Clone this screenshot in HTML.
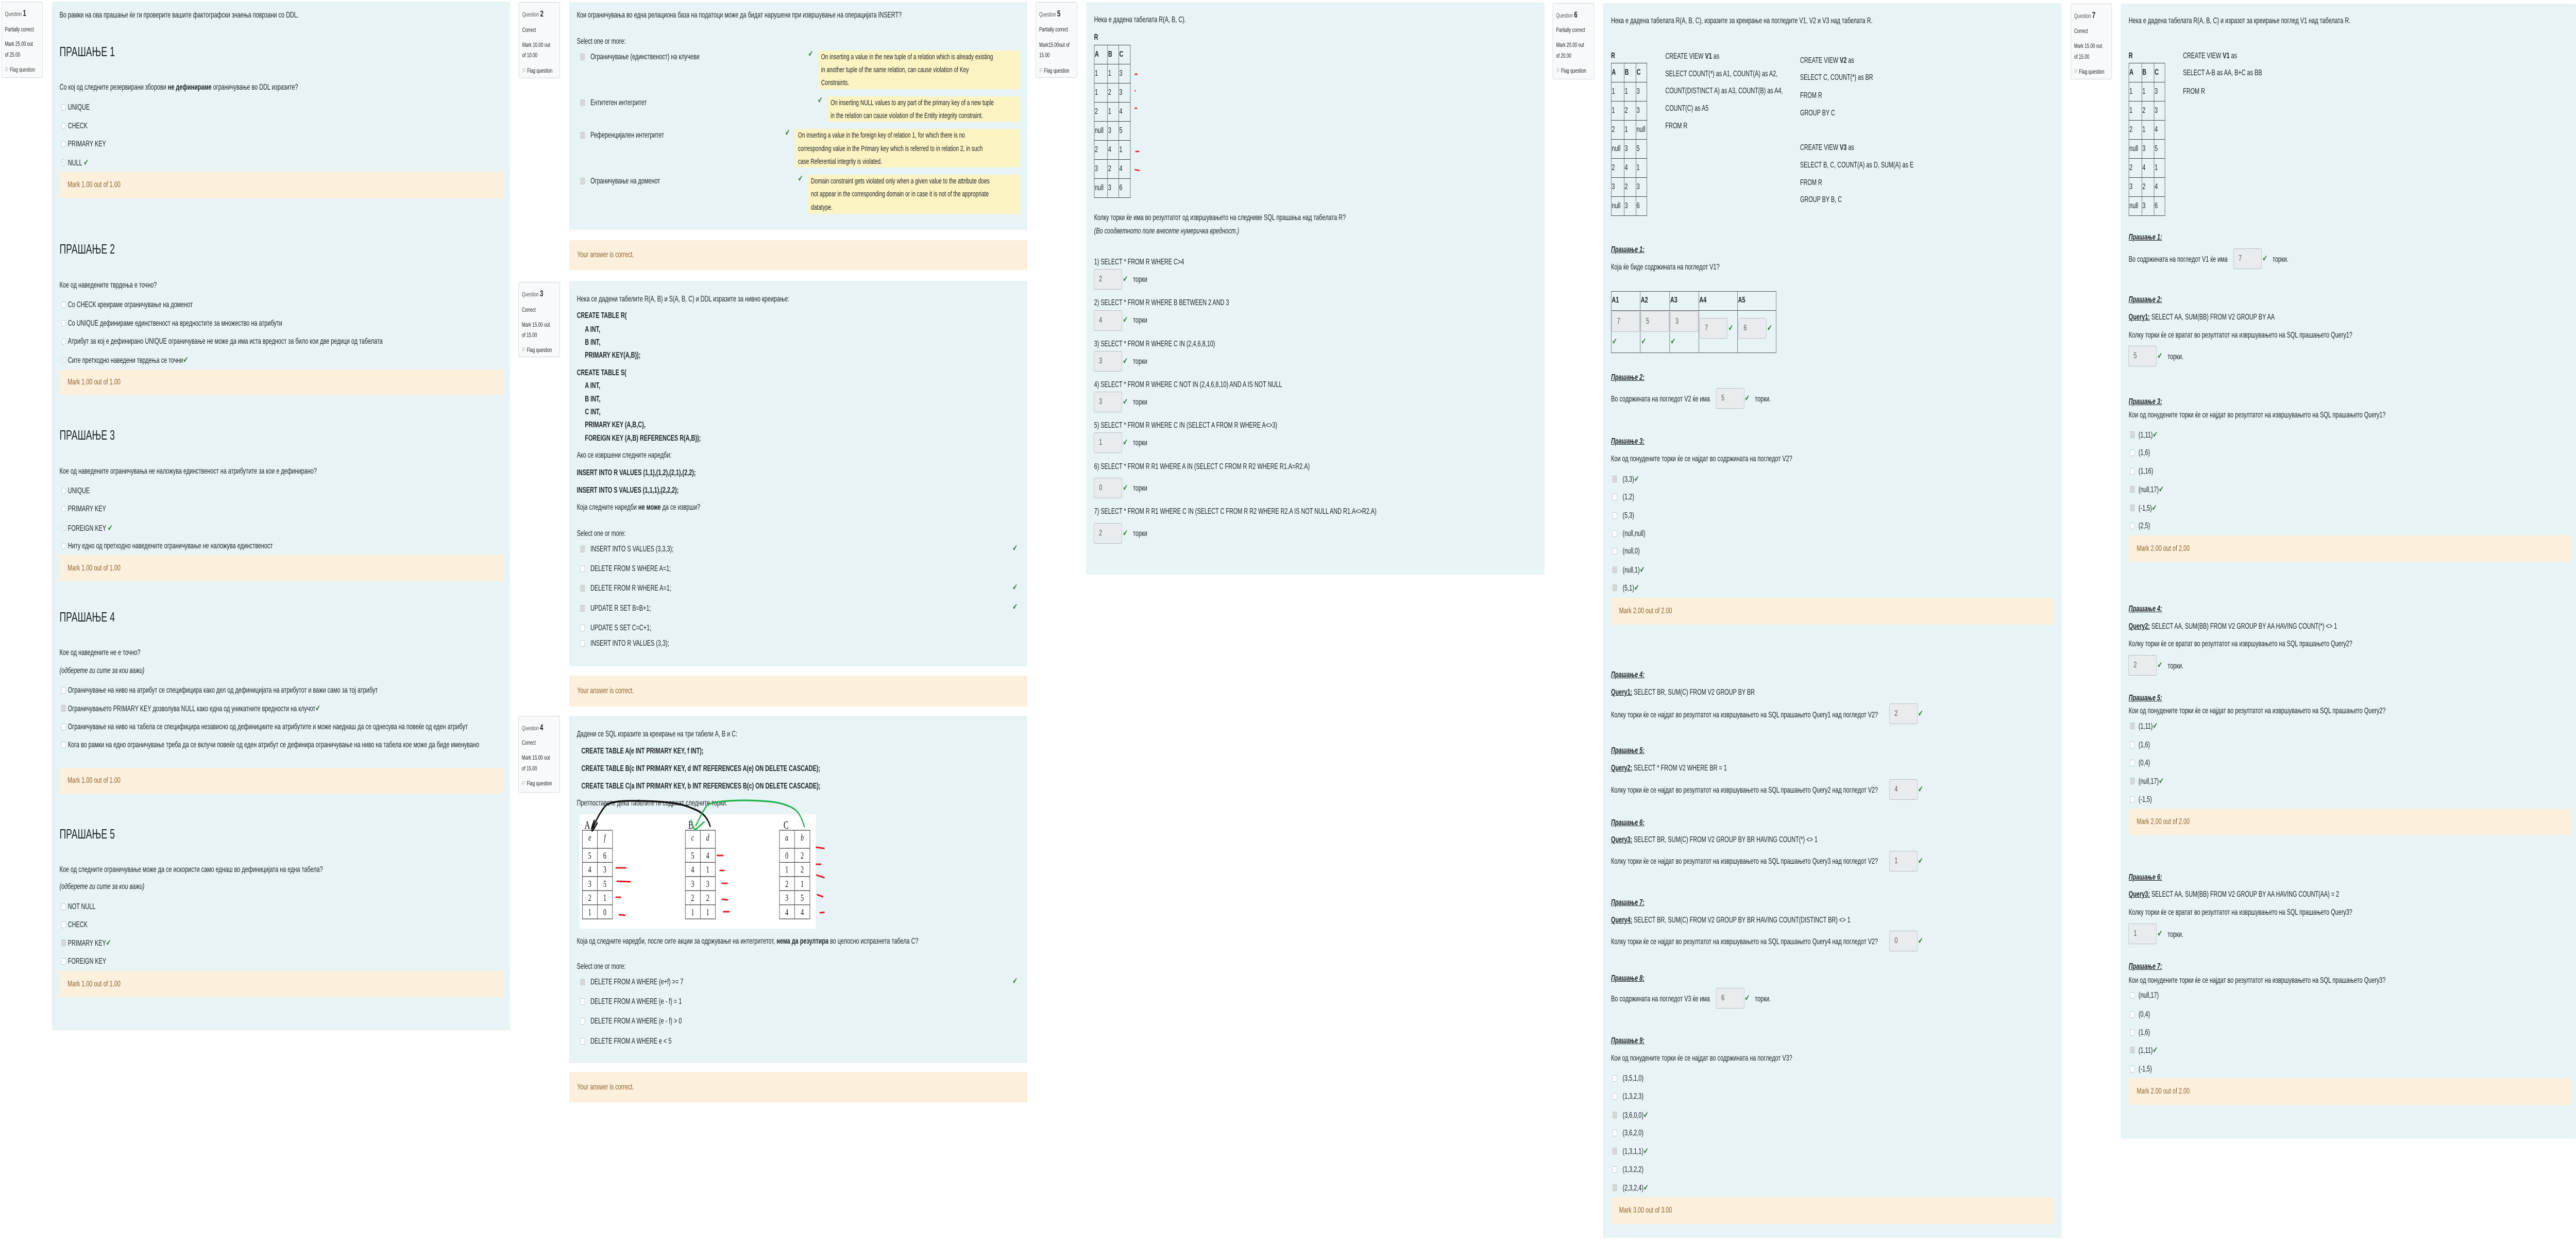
<!DOCTYPE html>
<html><head><meta charset="utf-8">
<style>
*{margin:0;padding:0;box-sizing:border-box}
html,body{background:#fff;overflow:hidden}
body{position:relative;font-family:"Liberation Sans","DejaVu Sans",sans-serif;color:#1d2125;font-size:16px}
#w{position:absolute;left:0;top:0;width:7360px;height:2408px;transform:scale(0.67935,1);transform-origin:0 0;overflow:hidden;background:#fff}
.a{position:absolute}
.t{position:absolute;white-space:nowrap;line-height:18px;font-size:16px}
.p{position:absolute;background:#e7f3f5;border-radius:3px}
.i{position:absolute;background:#f8f9fa;border:1px solid #cfd4da;border-radius:3px;font-size:12px;color:#1d2125}
.i div{position:absolute;left:9px;white-space:nowrap}
.i b{font-size:17px}
.fb{position:absolute;background:#fcefdc;border-radius:3px}
.fb span{position:absolute;left:23px;top:50%;transform:translateY(-50%);color:#8e662e;font-size:16px;white-space:nowrap}
.y{position:absolute;background:#fcf3c3;font-size:15px}
.y div{position:absolute;left:10px;white-space:nowrap;line-height:18px}
.h{position:absolute;font-size:26px;white-space:nowrap;line-height:30px;color:#1d2125}
.r{position:absolute;width:13px;height:13px;border:1px solid #c3c7cb;border-radius:50%;background:#fff}
.r.on{background:#e3e3e3;box-shadow:inset 0 0 0 3px #fff}
.c{position:absolute;width:13px;height:13px;border:1px solid #c3c7cb;border-radius:2px;background:#fff}
.c.on{background:#d7d7d7;border-color:#c8c8c8}
.k{color:#3b7f3b;font-weight:bold;font-size:17px}
.in{position:absolute;width:81px;height:40px;background:#e9ecef;border:1px solid #b8bec4;border-radius:3px;color:#555;font-size:16px;padding:10px 14px;line-height:18px}
.u{font-weight:bold;font-style:italic;text-decoration:underline}
.qb{font-weight:bold;text-decoration:underline}
table.g{position:absolute;border-collapse:collapse;font-size:16px}
table.g td{border:1.5px solid #444;padding:0 0 0 1px;height:37px;vertical-align:middle;line-height:18px}
</style></head><body>
<div id="w">

<!-- ============ Q1 ============ -->
<div class="i" style="left:4px;top:3px;width:118px;height:148px">
<div style="top:12px"><span style="color:#555">Question</span> <b>1</b></div>
<div style="top:46px">Partially correct</div>
<div style="top:74px">Mark 25.00 out</div>
<div style="top:95px">of 25.00</div>
<div style="top:124px;color:#333"><span style="color:#777">⚐</span> Flag question</div>
</div>
<div class="p" style="left:148px;top:3px;width:1309px;height:1996px"></div>
<div class="t" style="left:170px;top:21px">Во рамки на ова прашање ќе ги проверите вашите фактографски знаења поврзани со DDL.</div>
<div class="h" style="left:170px;top:85px">ПРАШАЊЕ 1</div>
<div class="t" style="left:170px;top:161px">Со кој од следните резервирани зборови <b>не дефинираме</b> ограничување во DDL изразите?</div>
<div class="r" style="left:175px;top:202px"></div><div class="t" style="left:194px;top:200px">UNIQUE</div>
<div class="r" style="left:175px;top:238px"></div><div class="t" style="left:194px;top:236px">CHECK</div>
<div class="r" style="left:175px;top:273px"></div><div class="t" style="left:194px;top:271px">PRIMARY KEY</div>
<div class="r on" style="left:175px;top:309px"></div><div class="t" style="left:194px;top:307px">NULL <span class="k">✔</span></div>
<div class="fb" style="left:170px;top:333px;width:1266px;height:52px"><span>Mark 1.00 out of 1.00</span></div>

<div class="h" style="left:170px;top:468px">ПРАШАЊЕ 2</div>
<div class="t" style="left:170px;top:545px">Кое од наведените тврдења е точно?</div>
<div class="r" style="left:175px;top:585px"></div><div class="t" style="left:194px;top:583px">Со CHECK креираме ограничување на доменот</div>
<div class="r" style="left:175px;top:621px"></div><div class="t" style="left:194px;top:619px">Со UNIQUE дефинираме единственост на вредностите за множество на атрибути</div>
<div class="r" style="left:175px;top:656px"></div><div class="t" style="left:194px;top:654px">Атрибут за кој е дефинирано UNIQUE ограничување не може да има иста вредност за било кои две редици од табелата</div>
<div class="r on" style="left:175px;top:692px"></div><div class="t" style="left:194px;top:690px">Сите претходно наведени тврдења се точни<span class="k">✔</span></div>
<div class="fb" style="left:170px;top:717px;width:1266px;height:50px"><span>Mark 1.00 out of 1.00</span></div>

<div class="h" style="left:170px;top:829px">ПРАШАЊЕ 3</div>
<div class="t" style="left:170px;top:906px">Кое од наведените ограничувања не наложува единственост на атрибутите за кои е дефинирано?</div>
<div class="r" style="left:175px;top:946px"></div><div class="t" style="left:194px;top:944px">UNIQUE</div>
<div class="r" style="left:175px;top:981px"></div><div class="t" style="left:194px;top:979px">PRIMARY KEY</div>
<div class="r on" style="left:175px;top:1018px"></div><div class="t" style="left:194px;top:1016px">FOREIGN KEY <span class="k">✔</span></div>
<div class="r" style="left:175px;top:1053px"></div><div class="t" style="left:194px;top:1051px">Ниту едно од претходно наведените ограничување не наложува единственост</div>
<div class="fb" style="left:170px;top:1077px;width:1266px;height:51px"><span>Mark 1.00 out of 1.00</span></div>

<div class="h" style="left:170px;top:1182px">ПРАШАЊЕ 4</div>
<div class="t" style="left:170px;top:1258px">Кое од наведените не е точно?</div>
<div class="t" style="left:170px;top:1293px;font-style:italic">(одберете ги сите за кои важи)</div>
<div class="c" style="left:175px;top:1333px"></div><div class="t" style="left:194px;top:1331px">Ограничување на ниво на атрибут се специфицира како дел од дефиницијата на атрибутот и важи само за тој атрибут</div>
<div class="c on" style="left:175px;top:1368px"></div><div class="t" style="left:194px;top:1366px">Ограничувањето PRIMARY KEY дозволува NULL како една од уникатните вредности на клучот<span class="k">✔</span></div>
<div class="c" style="left:175px;top:1404px"></div><div class="t" style="left:194px;top:1402px">Ограничување на ниво на табела се специфицира независно од дефинициите на атрибутите и може наеднаш да се однесува на повеќе од еден атрибут</div>
<div class="c" style="left:175px;top:1439px"></div><div class="t" style="left:194px;top:1437px">Кога во рамки на едно ограничување треба да се вклучи повеќе од еден атрибут се дефинира ограничување на ниво на табела кое може да биде именувано</div>
<div class="fb" style="left:170px;top:1490px;width:1266px;height:50px"><span>Mark 1.00 out of 1.00</span></div>

<div class="h" style="left:170px;top:1603px">ПРАШАЊЕ 5</div>
<div class="t" style="left:170px;top:1679px">Кое од следните ограничување може да се искористи само еднаш во дефиницијата на една табела?</div>
<div class="t" style="left:170px;top:1712px;font-style:italic">(одберете ги сите за кои важи)</div>
<div class="c" style="left:175px;top:1753px"></div><div class="t" style="left:194px;top:1751px">NOT NULL</div>
<div class="c" style="left:175px;top:1788px"></div><div class="t" style="left:194px;top:1786px">CHECK</div>
<div class="c on" style="left:175px;top:1823px"></div><div class="t" style="left:194px;top:1821px">PRIMARY KEY<span class="k">✔</span></div>
<div class="c" style="left:175px;top:1859px"></div><div class="t" style="left:194px;top:1857px">FOREIGN KEY</div>
<div class="fb" style="left:170px;top:1884px;width:1266px;height:51px"><span>Mark 1.00 out of 1.00</span></div>

<!-- ============ Q2 ============ -->
<div class="i" style="left:1482px;top:4px;width:118px;height:148px">
<div style="top:12px"><span style="color:#555">Question</span> <b>2</b></div>
<div style="top:46px">Correct</div>
<div style="top:75px">Mark 10.00 out</div>
<div style="top:95px">of 10.00</div>
<div style="top:125px"><span style="color:#777">⚐</span> Flag question</div>
</div>
<div class="p" style="left:1626px;top:4px;width:1309px;height:442px"></div>
<div class="t" style="left:1648px;top:21px">Кои ограничувања во една релациона база на податоци може да бидат нарушени при извршување на операцијата INSERT?</div>
<div class="t" style="left:1648px;top:72px">Select one or more:</div>
<div class="c on" style="left:1658px;top:104px"></div><div class="t" style="left:1687px;top:102px">Ограничување (единственост) на клучеви</div>
<div class="c on" style="left:1658px;top:193px"></div><div class="t" style="left:1687px;top:191px">Ентитетен интегритет</div>
<div class="c on" style="left:1658px;top:256px"></div><div class="t" style="left:1687px;top:254px">Референцијален интегритет</div>
<div class="c on" style="left:1658px;top:345px"></div><div class="t" style="left:1687px;top:343px">Ограничување на доменот</div>
<div class="t k" style="left:2309px;top:96px">✔</div>
<div class="y" style="left:2336px;top:98px;width:576px;height:75px"><div style="top:4px">On inserting a value in the new tuple of a relation which is already existing</div><div style="top:29px">in another tuple of the same relation, can cause violation of Key</div><div style="top:54px">Constraints.</div></div>
<div class="t k" style="left:2336px;top:186px">✔</div>
<div class="y" style="left:2363px;top:187px;width:549px;height:49px"><div style="top:4px">On inserting NULL values to any part of the primary key of a new tuple</div><div style="top:29px">in the relation can cause violation of the Entity integrity constraint.</div></div>
<div class="t k" style="left:2243px;top:249px">✔</div>
<div class="y" style="left:2270px;top:250px;width:642px;height:75px"><div style="top:4px">On inserting a value in the foreign key of relation 1, for which there is no</div><div style="top:30px">corresponding value in the Primary key which is referred to in relation 2, in such</div><div style="top:55px">case Referential integrity is violated.</div></div>
<div class="t k" style="left:2280px;top:338px">✔</div>
<div class="y" style="left:2307px;top:339px;width:605px;height:76px"><div style="top:4px">Domain constraint gets violated only when a given value to the attribute does</div><div style="top:29px">not appear in the corresponding domain or in case it is not of the appropriate</div><div style="top:55px">datatype.</div></div>
<div class="fb" style="left:1626px;top:466px;width:1309px;height:58px"><span>Your answer is correct.</span></div>

<!-- ============ Q3 ============ -->
<div class="i" style="left:1481px;top:547px;width:119px;height:146px">
<div style="top:12px"><span style="color:#555">Question</span> <b>3</b></div>
<div style="top:46px">Correct</div>
<div style="top:75px">Mark 15.00 out</div>
<div style="top:95px">of 15.00</div>
<div style="top:124px"><span style="color:#777">⚐</span> Flag question</div>
</div>
<div class="p" style="left:1626px;top:545px;width:1309px;height:748px"></div>
<div class="t" style="left:1648px;top:572px">Нека се дадени табелите R(A, B) и S(A, B, C) и DDL изразите за нивно креирање:</div>
<div class="t" style="left:1648px;top:604px;font-weight:bold">CREATE TABLE R(</div>
<div class="t" style="left:1671px;top:631px;font-weight:bold">A INT,</div>
<div class="t" style="left:1671px;top:656px;font-weight:bold">B INT,</div>
<div class="t" style="left:1671px;top:681px;font-weight:bold">PRIMARY KEY(A,B));</div>
<div class="t" style="left:1648px;top:715px;font-weight:bold">CREATE TABLE S(</div>
<div class="t" style="left:1671px;top:740px;font-weight:bold">A INT,</div>
<div class="t" style="left:1671px;top:766px;font-weight:bold">B INT,</div>
<div class="t" style="left:1671px;top:791px;font-weight:bold">C INT,</div>
<div class="t" style="left:1671px;top:816px;font-weight:bold">PRIMARY KEY (A,B,C),</div>
<div class="t" style="left:1671px;top:842px;font-weight:bold">FOREIGN KEY (A,B) REFERENCES R(A,B));</div>
<div class="t" style="left:1648px;top:875px">Ако се извршени следните наредби:</div>
<div class="t" style="left:1648px;top:909px;font-weight:bold">INSERT INTO R VALUES (1,1),(1,2),(2,1),(2,2);</div>
<div class="t" style="left:1648px;top:943px;font-weight:bold">INSERT INTO S VALUES (1,1,1),(2,2,2);</div>
<div class="t" style="left:1648px;top:976px">Која следните наредби <b>не може</b> да се изврши?</div>
<div class="t" style="left:1648px;top:1027px">Select one or more:</div>
<div class="c on" style="left:1658px;top:1059px"></div><div class="t" style="left:1687px;top:1057px">INSERT INTO S VALUES (3,3,3);</div>
<div class="c" style="left:1658px;top:1097px"></div><div class="t" style="left:1687px;top:1095px">DELETE FROM S WHERE A=1;</div>
<div class="c on" style="left:1658px;top:1135px"></div><div class="t" style="left:1687px;top:1133px">DELETE FROM R WHERE A=1;</div>
<div class="c on" style="left:1658px;top:1174px"></div><div class="t" style="left:1687px;top:1172px">UPDATE R SET B=B+1;</div>
<div class="c" style="left:1658px;top:1212px"></div><div class="t" style="left:1687px;top:1210px">UPDATE S SET C=C+1;</div>
<div class="c" style="left:1658px;top:1242px"></div><div class="t" style="left:1687px;top:1240px">INSERT INTO R VALUES (3,3);</div>
<div class="t k" style="left:2893px;top:1055px">✔</div>
<div class="t k" style="left:2893px;top:1131px">✔</div>
<div class="t k" style="left:2893px;top:1169px">✔</div>
<div class="fb" style="left:1626px;top:1311px;width:1309px;height:60px"><span>Your answer is correct.</span></div>

<!-- ============ Q4 ============ -->
<div class="i" style="left:1481px;top:1389px;width:119px;height:149px">
<div style="top:12px"><span style="color:#555">Question</span> <b>4</b></div>
<div style="top:44px">Correct</div>
<div style="top:73px">Mark 15.00 out</div>
<div style="top:94px">of 15.00</div>
<div style="top:123px"><span style="color:#777">⚐</span> Flag question</div>
</div>
<div class="p" style="left:1626px;top:1389px;width:1309px;height:674px"></div>
<div class="t" style="left:1648px;top:1416px">Дадени се SQL изразите за креирање на три табели A, B и C:</div>
<div class="t" style="left:1661px;top:1449px;font-weight:bold">CREATE TABLE A(e INT PRIMARY KEY, f INT);</div>
<div class="t" style="left:1661px;top:1483px;font-weight:bold">CREATE TABLE B(c INT PRIMARY KEY, d INT REFERENCES A(e) ON DELETE CASCADE);</div>
<div class="t" style="left:1661px;top:1517px;font-weight:bold">CREATE TABLE C(a INT PRIMARY KEY, b INT REFERENCES B(c) ON DELETE CASCADE);</div>
<div class="t" style="left:1648px;top:1550px">Претпоставете дека табелите ги содржат следните торки:</div>
<svg class="a" style="left:1656px;top:1540px" width="700" height="265" viewBox="0 0 700 265">
<rect x="0" y="40" width="675" height="222" fill="#fff"/>
<g font-family="Liberation Serif,serif" font-size="18" fill="#111" text-anchor="middle">
<g stroke="#444" stroke-width="1.3" fill="none">
<rect x="8" y="71" width="86" height="172"/><line x1="51" y1="71" x2="51" y2="243"/>
<line x1="8" y1="106" x2="94" y2="106"/><line x1="8" y1="133.4" x2="94" y2="133.4"/><line x1="8" y1="160.8" x2="94" y2="160.8"/><line x1="8" y1="188.2" x2="94" y2="188.2"/><line x1="8" y1="215.6" x2="94" y2="215.6"/>
<rect x="302" y="71" width="86" height="172"/><line x1="345" y1="71" x2="345" y2="243"/>
<line x1="302" y1="106" x2="388" y2="106"/><line x1="302" y1="133.4" x2="388" y2="133.4"/><line x1="302" y1="160.8" x2="388" y2="160.8"/><line x1="302" y1="188.2" x2="388" y2="188.2"/><line x1="302" y1="215.6" x2="388" y2="215.6"/>
<rect x="571" y="71" width="87" height="172"/><line x1="614" y1="71" x2="614" y2="243"/>
<line x1="571" y1="106" x2="658" y2="106"/><line x1="571" y1="133.4" x2="658" y2="133.4"/><line x1="571" y1="160.8" x2="658" y2="160.8"/><line x1="571" y1="188.2" x2="658" y2="188.2"/><line x1="571" y1="215.6" x2="658" y2="215.6"/>
</g>
<text x="22" y="68" font-size="22">A</text><text x="318" y="68" font-size="22">B</text><text x="590" y="68" font-size="22">C</text>
<g font-style="italic"><text x="29" y="91">e</text><text x="72" y="91">f</text><text x="323" y="91">c</text><text x="366" y="91">d</text><text x="592" y="91">a</text><text x="636" y="91">b</text></g>
<text x="29" y="126">5</text><text x="72" y="126">6</text><text x="29" y="153">4</text><text x="72" y="153">3</text><text x="29" y="181">3</text><text x="72" y="181">5</text><text x="29" y="208">2</text><text x="72" y="208">1</text><text x="29" y="236">1</text><text x="72" y="236">0</text>
<text x="323" y="126">5</text><text x="366" y="126">4</text><text x="323" y="153">4</text><text x="366" y="153">1</text><text x="323" y="181">3</text><text x="366" y="181">3</text><text x="323" y="208">2</text><text x="366" y="208">2</text><text x="323" y="236">1</text><text x="366" y="236">1</text>
<text x="592" y="126">0</text><text x="636" y="126">2</text><text x="592" y="153">1</text><text x="636" y="153">2</text><text x="592" y="181">2</text><text x="636" y="181">1</text><text x="592" y="208">3</text><text x="636" y="208">5</text><text x="592" y="236">4</text><text x="636" y="236">4</text>
</g>
<g stroke="#e8141c" stroke-width="3" fill="none" stroke-linecap="round">
<line x1="104" y1="144" x2="132" y2="144"/><line x1="107" y1="170" x2="145" y2="171"/><line x1="104" y1="201" x2="117" y2="201"/><line x1="113" y1="235" x2="130" y2="236"/>
<line x1="393" y1="120" x2="410" y2="120"/><line x1="401" y1="149" x2="413" y2="149"/><line x1="407" y1="174" x2="422" y2="174"/><line x1="407" y1="205" x2="423" y2="206"/><line x1="411" y1="229" x2="427" y2="229"/>
<line x1="676" y1="104" x2="706" y2="107"/><line x1="676" y1="137" x2="689" y2="137"/><line x1="677" y1="158" x2="704" y2="164"/><line x1="679" y1="196" x2="695" y2="200"/><line x1="687" y1="231" x2="702" y2="230"/>
</g>
<path d="M373 63 C365 45 350 35 320 28 C280 15 200 14 150 14 C100 14 80 18 72 25 C55 40 45 55 38 66 M42 52 C38 60 32 68 36 72 C40 70 46 62 50 57" stroke="#111" stroke-width="3.5" fill="none" stroke-linecap="round"/>
<path d="M642 64 C632 40 620 30 600 25 C570 15 530 14 480 13 C420 13 380 16 365 22 C355 30 345 45 332 62 M318 52 C322 60 326 68 330 70 C338 66 350 58 356 55" stroke="#22b14c" stroke-width="3.2" fill="none" stroke-linecap="round"/>
</svg>
<div class="t" style="left:1648px;top:1818px">Која од следните наредби, после сите акции за одржување на интегритетот, <b>нема да резултира</b> во целосно испразнета табела C?</div>
<div class="t" style="left:1648px;top:1867px">Select one or more:</div>
<div class="c on" style="left:1658px;top:1899px"></div><div class="t" style="left:1687px;top:1897px">DELETE FROM A WHERE (e+f) &gt;= 7</div>
<div class="c" style="left:1658px;top:1937px"></div><div class="t" style="left:1687px;top:1935px">DELETE FROM A WHERE (e - f) = 1</div>
<div class="c" style="left:1658px;top:1975px"></div><div class="t" style="left:1687px;top:1973px">DELETE FROM A WHERE (e - f) &gt; 0</div>
<div class="c" style="left:1658px;top:2014px"></div><div class="t" style="left:1687px;top:2012px">DELETE FROM A WHERE e &lt; 5</div>
<div class="t k" style="left:2893px;top:1895px">✔</div>
<div class="fb" style="left:1626px;top:2080px;width:1309px;height:59px"><span>Your answer is correct.</span></div>

<!-- ============ Q5 ============ -->
<div class="i" style="left:2959px;top:4px;width:119px;height:147px">
<div style="top:12px"><span style="color:#555">Question</span> <b>5</b></div>
<div style="top:45px">Partially correct</div>
<div style="top:75px">Mark15.00out of</div>
<div style="top:95px">15.00</div>
<div style="top:125px"><span style="color:#777">⚐</span> Flag question</div>
</div>
<div class="p" style="left:3103px;top:4px;width:1310px;height:1111px"></div>
<div class="t" style="left:3126px;top:30px">Нека е дадена табелата R(A, B, C).</div>
<div class="t" style="left:3126px;top:64px;font-weight:bold">R</div>
<table class="g" style="left:3126px;top:87px;width:104px"><tr><td style="width:38px;font-weight:bold">A</td><td style="width:32px;font-weight:bold">B</td><td style="font-weight:bold">C</td></tr>
<tr><td>1</td><td>1</td><td>3</td></tr><tr><td>1</td><td>2</td><td>3</td></tr><tr><td>2</td><td>1</td><td>4</td></tr><tr><td>null</td><td>3</td><td>5</td></tr><tr><td>2</td><td>4</td><td>1</td></tr><tr><td>3</td><td>2</td><td>4</td></tr><tr><td>null</td><td>3</td><td>6</td></tr></table>
<svg class="a" style="left:3238px;top:130px" width="30" height="210"><g stroke="#e8141c" stroke-width="2.5"><line x1="4" y1="14" x2="12" y2="14"/><line x1="4" y1="46" x2="7" y2="46"/><line x1="4" y1="80" x2="11" y2="80"/><line x1="6" y1="164" x2="17" y2="164"/><line x1="4" y1="199" x2="18" y2="201"/></g></svg>
<div class="t" style="left:3126px;top:414px">Колку торки ќе има во резултатот од извршувањето на следниве SQL прашања над табелата R?</div>
<div class="t" style="left:3126px;top:440px;font-style:italic">(Во соодветното поле внесете нумеричка вредност.)</div>
<div class="t" style="left:3126px;top:500px">1) SELECT * FROM R WHERE C&gt;4</div>
<div class="in" style="left:3125px;top:522px">2</div><div class="t k" style="left:3208px;top:533px">✔</div><div class="t" style="left:3237px;top:534px">торки</div>
<div class="t" style="left:3126px;top:579px">2) SELECT * FROM R WHERE B BETWEEN 2 AND 3</div>
<div class="in" style="left:3125px;top:602px">4</div><div class="t k" style="left:3208px;top:612px">✔</div><div class="t" style="left:3237px;top:613px">торки</div>
<div class="t" style="left:3126px;top:659px">3) SELECT * FROM R WHERE C IN (2,4,6,8,10)</div>
<div class="in" style="left:3125px;top:681px">3</div><div class="t k" style="left:3208px;top:692px">✔</div><div class="t" style="left:3237px;top:693px">торки</div>
<div class="t" style="left:3126px;top:738px">4) SELECT * FROM R WHERE C NOT IN (2,4,6,8,10) AND A IS NOT NULL</div>
<div class="in" style="left:3125px;top:760px">3</div><div class="t k" style="left:3208px;top:771px">✔</div><div class="t" style="left:3237px;top:772px">торки</div>
<div class="t" style="left:3126px;top:817px">5) SELECT * FROM R WHERE C IN (SELECT A FROM R WHERE A&lt;&gt;3)</div>
<div class="in" style="left:3125px;top:839px">1</div><div class="t k" style="left:3208px;top:850px">✔</div><div class="t" style="left:3237px;top:851px">торки</div>
<div class="t" style="left:3126px;top:897px">6) SELECT * FROM R R1 WHERE A IN (SELECT C FROM R R2 WHERE R1.A=R2.A)</div>
<div class="in" style="left:3125px;top:927px">0</div><div class="t k" style="left:3208px;top:938px">✔</div><div class="t" style="left:3237px;top:939px">торки</div>
<div class="t" style="left:3126px;top:984px">7) SELECT * FROM R R1 WHERE C IN (SELECT C FROM R R2 WHERE R2.A IS NOT NULL AND R1.A&lt;&gt;R2.A)</div>
<div class="in" style="left:3125px;top:1015px">2</div><div class="t k" style="left:3208px;top:1026px">✔</div><div class="t" style="left:3237px;top:1027px">торки</div>

<!-- ============ Q6 ============ -->
<div class="i" style="left:4436px;top:6px;width:119px;height:148px">
<div style="top:12px"><span style="color:#555">Question</span> <b>6</b></div>
<div style="top:44px">Partially correct</div>
<div style="top:73px">Mark 20.00 out</div>
<div style="top:94px">of 20.00</div>
<div style="top:123px"><span style="color:#777">⚐</span> Flag question</div>
</div>
<div class="p" style="left:4580px;top:6px;width:1310px;height:2396px"></div>
<div class="t" style="left:4603px;top:32px">Нека е дадена табелата R(A, B, C), изразите за креирање на погледите V1, V2 и V3 над табелата R.</div>
<div class="t" style="left:4603px;top:100px;font-weight:bold">R</div>
<table class="g" style="left:4603px;top:122px;width:103px"><tr><td style="width:37px;font-weight:bold">A</td><td style="width:34px;font-weight:bold">B</td><td style="font-weight:bold">C</td></tr>
<tr><td>1</td><td>1</td><td>3</td></tr><tr><td>1</td><td>2</td><td>3</td></tr><tr><td>2</td><td>1</td><td>null</td></tr><tr><td>null</td><td>3</td><td>5</td></tr><tr><td>2</td><td>4</td><td>1</td></tr><tr><td>3</td><td>2</td><td>3</td></tr><tr><td>null</td><td>3</td><td>6</td></tr></table>
<div class="t" style="left:4758px;top:101px">CREATE VIEW <b>V1</b> as</div>
<div class="t" style="left:4758px;top:135px">SELECT COUNT(*) as A1, COUNT(A) as A2,</div>
<div class="t" style="left:4758px;top:168px">COUNT(DISTINCT A) as A3, COUNT(B) as A4,</div>
<div class="t" style="left:4758px;top:202px">COUNT(C) as A5</div>
<div class="t" style="left:4758px;top:236px">FROM R</div>
<div class="t" style="left:5143px;top:109px">CREATE VIEW <b>V2</b> as</div>
<div class="t" style="left:5143px;top:142px">SELECT C, COUNT(*) as BR</div>
<div class="t" style="left:5143px;top:177px">FROM R</div>
<div class="t" style="left:5143px;top:211px">GROUP BY C</div>
<div class="t" style="left:5143px;top:278px">CREATE VIEW <b>V3</b> as</div>
<div class="t" style="left:5143px;top:312px">SELECT B, C, COUNT(A) as D, SUM(A) as E</div>
<div class="t" style="left:5143px;top:346px">FROM R</div>
<div class="t" style="left:5143px;top:379px">GROUP BY B, C</div>
<div class="t u" style="left:4603px;top:476px">Прашање 1:</div>
<div class="t" style="left:4603px;top:510px">Која ќе биде содржината на погледот V1?</div>
<div class="a" style="left:4603px;top:565px;width:472px;height:120px;border:1.5px solid #555"></div>
<div class="a" style="left:4603px;top:602px;width:472px;height:1px;background:#555"></div>
<div class="a" style="left:4686px;top:565px;width:1px;height:120px;background:#555"></div>
<div class="a" style="left:4770px;top:565px;width:1px;height:120px;background:#555"></div>
<div class="a" style="left:4853px;top:565px;width:1px;height:120px;background:#555"></div>
<div class="a" style="left:4964px;top:565px;width:1px;height:120px;background:#555"></div>
<div class="t" style="left:4605px;top:574px;font-weight:bold">A1</div><div class="t" style="left:4688px;top:574px;font-weight:bold">A2</div><div class="t" style="left:4772px;top:574px;font-weight:bold">A3</div><div class="t" style="left:4855px;top:574px;font-weight:bold">A4</div><div class="t" style="left:4966px;top:574px;font-weight:bold">A5</div>
<div class="in" style="left:4605px;top:604px;width:80px">7</div><div class="t k" style="left:4606px;top:654px">✔</div>
<div class="in" style="left:4688px;top:604px;width:80px">5</div><div class="t k" style="left:4689px;top:654px">✔</div>
<div class="in" style="left:4772px;top:604px;width:80px">3</div><div class="t k" style="left:4773px;top:654px">✔</div>
<div class="in" style="left:4856px;top:617px;width:80px">7</div><div class="t k" style="left:4938px;top:628px">✔</div>
<div class="in" style="left:4967px;top:617px;width:80px">6</div><div class="t k" style="left:5049px;top:628px">✔</div>
<div class="t u" style="left:4603px;top:724px">Прашање 2:</div>
<div class="t" style="left:4603px;top:766px">Во содржината на погледот V2 ќе има</div>
<div class="in" style="left:4903px;top:753px">5</div><div class="t k" style="left:4985px;top:764px">✔</div><div class="t" style="left:5014px;top:766px">торки.</div>
<div class="t u" style="left:4603px;top:848px">Прашање 3:</div>
<div class="t" style="left:4603px;top:882px">Кои од понудените торки ќе се најдат во содржината на погледот V2?</div>
<div class="c on" style="left:4607px;top:923px"></div><div class="t" style="left:4636px;top:921px">(3,3)<span class="k">✔</span></div>
<div class="c" style="left:4607px;top:958px"></div><div class="t" style="left:4636px;top:956px">(1,2)</div>
<div class="c" style="left:4607px;top:994px"></div><div class="t" style="left:4636px;top:992px">(5,3)</div>
<div class="c" style="left:4607px;top:1029px"></div><div class="t" style="left:4636px;top:1027px">(null,null)</div>
<div class="c" style="left:4607px;top:1063px"></div><div class="t" style="left:4636px;top:1061px">(null,0)</div>
<div class="c on" style="left:4607px;top:1099px"></div><div class="t" style="left:4636px;top:1097px">(null,1)<span class="k">✔</span></div>
<div class="c on" style="left:4607px;top:1134px"></div><div class="t" style="left:4636px;top:1132px">(5,1)<span class="k">✔</span></div>
<div class="fb" style="left:4603px;top:1160px;width:1264px;height:52px"><span>Mark 2.00 out of 2.00</span></div>
<div class="t u" style="left:4603px;top:1301px">Прашање 4:</div>
<div class="t" style="left:4603px;top:1335px"><span class="qb">Query1:</span> SELECT BR, SUM(C) FROM V2 GROUP BY BR</div>
<div class="t" style="left:4603px;top:1379px">Колку торки ќе се најдат во резултатот на извршувањето на SQL прашањето Query1 над погледот V2?</div>
<div class="in" style="left:5398px;top:1365px">2</div><div class="t k" style="left:5480px;top:1376px">✔</div>
<div class="t u" style="left:4603px;top:1448px">Прашање 5:</div>
<div class="t" style="left:4603px;top:1482px"><span class="qb">Query2:</span> SELECT * FROM V2 WHERE BR = 1</div>
<div class="t" style="left:4603px;top:1525px">Колку торки ќе се најдат во резултатот на извршувањето на SQL прашањето Query2 над погледот V2?</div>
<div class="in" style="left:5398px;top:1512px">4</div><div class="t k" style="left:5480px;top:1523px">✔</div>
<div class="t u" style="left:4603px;top:1588px">Прашање 6:</div>
<div class="t" style="left:4603px;top:1621px"><span class="qb">Query3:</span> SELECT BR, SUM(C) FROM V2 GROUP BY BR HAVING COUNT(*) &lt;&gt; 1</div>
<div class="t" style="left:4603px;top:1663px">Колку торки ќе се најдат во резултатот на извршувањето на SQL прашањето Query3 над погледот V2?</div>
<div class="in" style="left:5398px;top:1651px">1</div><div class="t k" style="left:5480px;top:1662px">✔</div>
<div class="t u" style="left:4603px;top:1743px">Прашање 7:</div>
<div class="t" style="left:4603px;top:1777px"><span class="qb">Query4:</span> SELECT BR, SUM(C) FROM V2 GROUP BY BR HAVING COUNT(DISTINCT BR) &lt;&gt; 1</div>
<div class="t" style="left:4603px;top:1819px">Колку торки ќе се најдат во резултатот на извршувањето на SQL прашањето Query4 над погледот V2?</div>
<div class="in" style="left:5398px;top:1806px">0</div><div class="t k" style="left:5480px;top:1817px">✔</div>
<div class="t u" style="left:4603px;top:1890px">Прашање 8:</div>
<div class="t" style="left:4603px;top:1930px">Во содржината на погледот V3 ќе има</div>
<div class="in" style="left:4903px;top:1917px">6</div><div class="t k" style="left:4985px;top:1928px">✔</div><div class="t" style="left:5014px;top:1930px">торки.</div>
<div class="t u" style="left:4603px;top:2011px">Прашање 9:</div>
<div class="t" style="left:4603px;top:2045px">Кои од понудените торки ќе се најдат во содржината на погледот V3?</div>
<div class="c" style="left:4607px;top:2086px"></div><div class="t" style="left:4636px;top:2084px">(3,5,1,0)</div>
<div class="c" style="left:4607px;top:2121px"></div><div class="t" style="left:4636px;top:2119px">(1,3,2,3)</div>
<div class="c on" style="left:4607px;top:2157px"></div><div class="t" style="left:4636px;top:2155px">(3,6,0,0)<span class="k">✔</span></div>
<div class="c" style="left:4607px;top:2192px"></div><div class="t" style="left:4636px;top:2190px">(3,6,2,0)</div>
<div class="c on" style="left:4607px;top:2227px"></div><div class="t" style="left:4636px;top:2225px">(1,3,1,1)<span class="k">✔</span></div>
<div class="c" style="left:4607px;top:2263px"></div><div class="t" style="left:4636px;top:2261px">(1,3,2,2)</div>
<div class="c on" style="left:4607px;top:2298px"></div><div class="t" style="left:4636px;top:2296px">(2,3,2,4)<span class="k">✔</span></div>
<div class="fb" style="left:4603px;top:2323px;width:1264px;height:52px"><span>Mark 3.00 out of 3.00</span></div>

<!-- ============ Q7 ============ -->
<div class="i" style="left:5916px;top:7px;width:118px;height:147px">
<div style="top:12px"><span style="color:#555">Question</span> <b>7</b></div>
<div style="top:45px">Correct</div>
<div style="top:74px">Mark 15.00 out</div>
<div style="top:95px">of 15.00</div>
<div style="top:124px"><span style="color:#777">⚐</span> Flag question</div>
</div>
<div class="p" style="left:6059px;top:7px;width:1301px;height:2202px"></div>
<div class="t" style="left:6082px;top:32px">Нека е дадена табелата R(A, B, C) и изразот за креирање поглед V1 над табелата R.</div>
<div class="t" style="left:6082px;top:100px;font-weight:bold">R</div>
<table class="g" style="left:6082px;top:122px;width:104px"><tr><td style="width:37px;font-weight:bold">A</td><td style="width:35px;font-weight:bold">B</td><td style="font-weight:bold">C</td></tr>
<tr><td>1</td><td>1</td><td>3</td></tr><tr><td>1</td><td>2</td><td>3</td></tr><tr><td>2</td><td>1</td><td>4</td></tr><tr><td>null</td><td>3</td><td>5</td></tr><tr><td>2</td><td>4</td><td>1</td></tr><tr><td>3</td><td>2</td><td>4</td></tr><tr><td>null</td><td>3</td><td>6</td></tr></table>
<div class="t" style="left:6237px;top:100px">CREATE VIEW <b>V1</b> as</div>
<div class="t" style="left:6237px;top:133px">SELECT A-B as AA, B+C as BB</div>
<div class="t" style="left:6237px;top:169px">FROM R</div>
<div class="t u" style="left:6082px;top:452px">Прашање 1:</div>
<div class="t" style="left:6082px;top:495px">Во содржината на погледот V1 ќе има</div>
<div class="in" style="left:6381px;top:482px">7</div><div class="t k" style="left:6464px;top:493px">✔</div><div class="t" style="left:6493px;top:495px">торки.</div>
<div class="t u" style="left:6082px;top:573px">Прашање 2:</div>
<div class="t" style="left:6082px;top:607px"><span class="qb">Query1:</span> SELECT AA, SUM(BB) FROM V2 GROUP BY AA</div>
<div class="t" style="left:6082px;top:642px">Колку торки ќе се вратат во резултатот на извршувањето на SQL прашањето Query1?</div>
<div class="in" style="left:6081px;top:671px">5</div><div class="t k" style="left:6164px;top:682px">✔</div><div class="t" style="left:6193px;top:684px">торки.</div>
<div class="t u" style="left:6082px;top:771px">Прашање 3:</div>
<div class="t" style="left:6082px;top:797px">Кои од понудените торки ќе се најдат во резултатот на извршувањето на SQL прашањето Query1?</div>
<div class="c on" style="left:6086px;top:837px"></div><div class="t" style="left:6110px;top:835px">(1,11)<span class="k">✔</span></div>
<div class="c" style="left:6086px;top:872px"></div><div class="t" style="left:6110px;top:870px">(1,6)</div>
<div class="c" style="left:6086px;top:908px"></div><div class="t" style="left:6110px;top:906px">(1,16)</div>
<div class="c on" style="left:6086px;top:943px"></div><div class="t" style="left:6110px;top:941px">(null,17)<span class="k">✔</span></div>
<div class="c on" style="left:6086px;top:979px"></div><div class="t" style="left:6110px;top:977px">(-1,5)<span class="k">✔</span></div>
<div class="c" style="left:6086px;top:1014px"></div><div class="t" style="left:6110px;top:1012px">(2,5)</div>
<div class="fb" style="left:6082px;top:1039px;width:1263px;height:51px"><span>Mark 2.00 out of 2.00</span></div>
<div class="t u" style="left:6082px;top:1173px">Прашање 4:</div>
<div class="t" style="left:6082px;top:1207px"><span class="qb">Query2:</span> SELECT AA, SUM(BB) FROM V2 GROUP BY AA HAVING COUNT(*) &lt;&gt; 1</div>
<div class="t" style="left:6082px;top:1241px">Колку торки ќе се вратат во резултатот на извршувањето на SQL прашањето Query2?</div>
<div class="in" style="left:6081px;top:1271px">2</div><div class="t k" style="left:6164px;top:1282px">✔</div><div class="t" style="left:6193px;top:1284px">торки.</div>
<div class="t u" style="left:6082px;top:1346px">Прашање 5:</div>
<div class="t" style="left:6082px;top:1371px">Кои од понудените торки ќе се најдат во резултатот на извршувањето на SQL прашањето Query2?</div>
<div class="c on" style="left:6086px;top:1402px"></div><div class="t" style="left:6110px;top:1400px">(1,11)<span class="k">✔</span></div>
<div class="c" style="left:6086px;top:1439px"></div><div class="t" style="left:6110px;top:1437px">(1,6)</div>
<div class="c" style="left:6086px;top:1474px"></div><div class="t" style="left:6110px;top:1472px">(0,4)</div>
<div class="c on" style="left:6086px;top:1509px"></div><div class="t" style="left:6110px;top:1507px">(null,17)<span class="k">✔</span></div>
<div class="c" style="left:6086px;top:1545px"></div><div class="t" style="left:6110px;top:1543px">(-1,5)</div>
<div class="fb" style="left:6082px;top:1569px;width:1263px;height:52px"><span>Mark 2.00 out of 2.00</span></div>
<div class="t u" style="left:6082px;top:1694px">Прашање 6:</div>
<div class="t" style="left:6082px;top:1727px"><span class="qb">Query3:</span> SELECT AA, SUM(BB) FROM V2 GROUP BY AA HAVING COUNT(AA) = 2</div>
<div class="t" style="left:6082px;top:1762px">Колку торки ќе се вратат во резултатот на извршувањето на SQL прашањето Query3?</div>
<div class="in" style="left:6081px;top:1792px">1</div><div class="t k" style="left:6164px;top:1803px">✔</div><div class="t" style="left:6193px;top:1805px">торки.</div>
<div class="t u" style="left:6082px;top:1867px">Прашање 7:</div>
<div class="t" style="left:6082px;top:1894px">Кои од понудените торки ќе се најдат во резултатот на извршувањето на SQL прашањето Query3?</div>
<div class="c" style="left:6086px;top:1925px"></div><div class="t" style="left:6110px;top:1923px">(null,17)</div>
<div class="c" style="left:6086px;top:1962px"></div><div class="t" style="left:6110px;top:1960px">(0,4)</div>
<div class="c" style="left:6086px;top:1997px"></div><div class="t" style="left:6110px;top:1995px">(1,6)</div>
<div class="c on" style="left:6086px;top:2031px"></div><div class="t" style="left:6110px;top:2029px">(1,11)<span class="k">✔</span></div>
<div class="c" style="left:6086px;top:2068px"></div><div class="t" style="left:6110px;top:2066px">(-1,5)</div>
<div class="fb" style="left:6082px;top:2092px;width:1263px;height:52px"><span>Mark 2.00 out of 2.00</span></div>

</div>
</body></html>
